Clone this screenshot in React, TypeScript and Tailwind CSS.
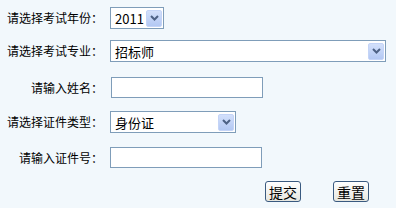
const font = { fontFamily: '"Noto Sans CJK SC", "Liberation Sans", sans-serif' };

function Arrow() {
    return (
        <div className="w-[16px] h-[17px] mr-[1px] flex items-center justify-center rounded-[2px] border border-[#c4d4f7] bg-gradient-to-b from-[#d3e0fb] to-[#b3c8f3]">
            <svg width="9" height="6" viewBox="0 0 9 6">
                <path d="M1 1 L4.5 4.5 L8 1" fill="none" stroke="#4d6185" strokeWidth="2" />
            </svg>
        </div>
    );
}

function FakeSelect({ value, width }: { value: string; width: string }) {
    return (
        <div className={`${width} h-[22px] flex items-center justify-between bg-white border border-[#7f9db9] pl-[4px] text-[13px] text-black`}>
            <span className="leading-none">{value}</span>
            <Arrow />
        </div>
    );
}

function Label({ children }: { children: string }) {
    return <div className="w-[104px] text-right text-[12px] text-black leading-none pr-[1px]">{children}</div>;
}

function Btn({ children }: { children: string }) {
    return (
        <button className="w-[36px] h-[21px] flex items-center justify-center rounded-[3px] border border-[#3a5a80] bg-gradient-to-b from-white to-[#e6e6df] text-[14px] text-black leading-none">
            {children}
        </button>
    );
}

export default function App() {
    return (
        <div className="w-[396px] h-[208px] bg-[#f2f8fc] pt-[7px]" style={font}>
            <div className="flex items-center">
                <Label>请选择考试年份：</Label>
                <div className="ml-[6px]">
                    <FakeSelect value="2011" width="w-[54px]" />
                </div>
            </div>
            <div className="flex items-center mt-[11px]">
                <Label>请选择考试专业：</Label>
                <div className="ml-[6px]">
                    <FakeSelect value="招标师" width="w-[276px]" />
                </div>
            </div>
            <div className="flex items-center mt-[15px]">
                <Label>请输入姓名：</Label>
                <input className="ml-[7px] w-[152px] h-[21px] bg-white border border-[#7f9db9] outline-none" />
            </div>
            <div className="flex items-center mt-[13px]">
                <Label>请选择证件类型：</Label>
                <div className="ml-[6px]">
                    <FakeSelect value="身份证" width="w-[126px]" />
                </div>
            </div>
            <div className="flex items-center mt-[14px]">
                <Label>请输入证件号：</Label>
                <input className="ml-[6px] w-[152px] h-[21px] bg-white border border-[#7f9db9] outline-none" />
            </div>
            <div className="flex mt-[13px] pl-[265px] gap-[32px]">
                <Btn>提交</Btn>
                <Btn>重置</Btn>
            </div>
        </div>
    );
}
